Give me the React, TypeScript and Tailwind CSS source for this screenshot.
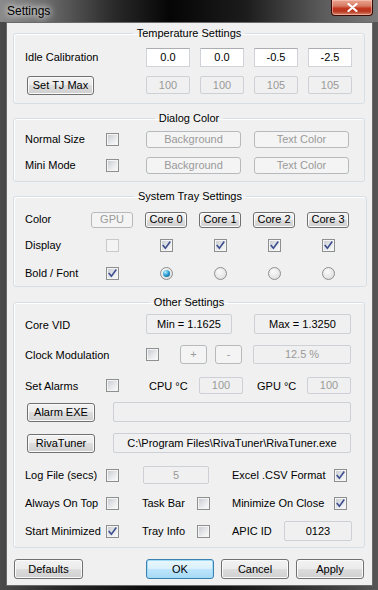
import React from "react";

function Check({ checked = false, disabled = false }: { checked?: boolean; disabled?: boolean }) {
  if (disabled) {
    return <div className="w-[13px] h-[13px] shrink-0 border border-[#c9c9c9] bg-[#f4f4f4]" />;
  }
  return (
    <div className="w-[13px] h-[13px] shrink-0 border border-[#8e8f8f] bg-[#f4f4f4] p-[1px]">
      <div className="w-full h-full bg-[linear-gradient(135deg,#c9cdd3_0%,#e9eaec_60%,#f9f9f9_100%)] flex items-center justify-center">
        {checked && (
          <svg width="9" height="9" viewBox="0 0 9 9">
            <path d="M1.2 4.6 L3.4 7.2 L7.8 1.2" fill="none" stroke="#3d4f8f" strokeWidth="1.6" strokeLinecap="square" />
          </svg>
        )}
      </div>
    </div>
  );
}

function Radio({ on = false }: { on?: boolean }) {
  return (
    <div className="w-[13px] h-[13px] shrink-0 rounded-full border border-[#8e8f8f] bg-[radial-gradient(circle_at_40%_35%,#fbfbfb_0%,#e2e2e2_70%,#cfcfcf_100%)] flex items-center justify-center">
      {on && (
        <div className="w-[7px] h-[7px] rounded-full bg-[radial-gradient(circle_at_35%_30%,#b4f0ff_0%,#2a9ad0_50%,#0a4a72_100%)]" />
      )}
    </div>
  );
}

function Btn({ children, className = "", disabled = false, def = false }: { children: React.ReactNode; className?: string; disabled?: boolean; def?: boolean }) {
  if (disabled) {
    return (
      <div className={"shrink-0 flex items-center justify-center border border-[#b6babd] rounded-[3px] bg-[#f4f4f4] text-[#9a9a9a] " + className}>
        {children}
      </div>
    );
  }
  if (def) {
    return (
      <div className={"shrink-0 flex items-center justify-center border border-[#3c7fb1] rounded-[3px] bg-[linear-gradient(#eaf6fd_0%,#d9f0fc_50%,#bee6fd_50%,#a7d9f5_100%)] shadow-[inset_0_0_0_1px_#9fdcf5] " + className}>
        {children}
      </div>
    );
  }
  return (
    <div className={"shrink-0 flex items-center justify-center border border-[#707070] rounded-[3px] bg-[linear-gradient(#f2f2f2_0%,#ebebeb_50%,#dddddd_50%,#cfcfcf_100%)] shadow-[inset_0_0_0_1px_#fbfbfb] " + className}>
      {children}
    </div>
  );
}

function Edit({ children, className = "" }: { children: React.ReactNode; className?: string }) {
  return (
    <div className={"shrink-0 flex items-center justify-center bg-white border border-[#d0d3d8] border-t-[#abadb3] " + className}>
      {children}
    </div>
  );
}

function Box({ children, className = "", dim = false }: { children?: React.ReactNode; className?: string; dim?: boolean }) {
  return (
    <div
      className={
        "shrink-0 flex items-center justify-center bg-[#f0f0f0] border border-[#cdd0d4] rounded-[2px] " +
        (dim ? "text-[#9a9a9a] " : "text-black ") +
        className
      }
    >
      {children}
    </div>
  );
}

function Group({ title, children, className = "" }: { title: string; children: React.ReactNode; className?: string }) {
  return (
    <fieldset className={"border border-[#d5dfe5] rounded-[3px] px-[11px] shadow-[inset_1px_1px_0_#ffffff] " + className}>
      {/* @ts-ignore */}
      <legend align="center" className="mx-auto px-[4px] leading-[16px]">
        {title}
      </legend>
      {children}
    </fieldset>
  );
}

export default function App() {
  return (
    <div className="w-[378px] h-[590px] overflow-hidden flex flex-col font-['Liberation_Sans',Arial,sans-serif] text-[11px] text-black bg-[linear-gradient(90deg,#4a4a4a_0%,#2a2a2a_15%,#0c0c0c_40%,#151515_60%,#3a3a3a_85%,#555555_100%)]">
      {/* Title bar */}
      <div className="h-[22px] shrink-0 flex items-start justify-between bg-[linear-gradient(90deg,#8a8a8a_0%,#6c6c6c_12%,#2a2a2a_30%,#050505_45%,#1c1c1c_65%,#5a5a5a_85%,#7a7a7a_100%)]">
        <div className="pl-[7px] pt-[3px] text-[12px] leading-[16px] text-black [text-shadow:0_0_6px_#ffffff,0_0_10px_#ffffff]">
          Settings
        </div>
        <div className="mr-[5px] w-[42px] h-[16px] rounded-b-[4px] border border-t-0 border-[#3b0a04] bg-[linear-gradient(#e9a591_0%,#d77a63_40%,#c4381f_55%,#b8361f_75%,#d88a6f_100%)] shadow-[inset_0_0_0_1px_rgba(255,210,200,0.5)] flex items-center justify-center">
          <svg width="11" height="9" viewBox="0 0 11 9">
            <path d="M1.5 1 L9.5 8 M9.5 1 L1.5 8" stroke="#ffffff" strokeWidth="2.2" strokeLinecap="round" />
          </svg>
        </div>
      </div>

      {/* Client area */}
      <div className="flex-1 ml-[6px] mr-[5px] mb-[4px] border border-[#6a6a6a] bg-[#f0f0f0] pl-[6px] pr-[7px] flex flex-col">
        {/* Temperature Settings */}
        <Group title="Temperature Settings" className="mt-[2px] pb-[9px]">
          <div className="flex items-center mt-[7px] h-[19px]">
            <div className="w-[121px] shrink-0">Idle Calibration</div>
            <div className="flex gap-[10px]">
              <Edit className="w-[44px] h-[19px]">0.0</Edit>
              <Edit className="w-[44px] h-[19px]">0.0</Edit>
              <Edit className="w-[44px] h-[19px]">-0.5</Edit>
              <Edit className="w-[44px] h-[19px]">-2.5</Edit>
            </div>
          </div>
          <div className="flex items-center mt-[9px] h-[18px]">
            <div className="w-[121px] shrink-0 flex">
              <Btn className="ml-[2px] w-[67px] h-[19px]">Set TJ Max</Btn>
            </div>
            <div className="flex gap-[10px]">
              <Box dim className="w-[44px] h-[18px]">100</Box>
              <Box dim className="w-[44px] h-[18px]">100</Box>
              <Box dim className="w-[44px] h-[18px]">105</Box>
              <Box dim className="w-[44px] h-[18px]">105</Box>
            </div>
          </div>
        </Group>

        {/* Dialog Color */}
        <Group title="Dialog Color" className="mt-[6px] pb-[7px]">
          <div className="flex items-center mt-[5px] h-[17px]">
            <div className="w-[81px] shrink-0">Normal Size</div>
            <Check />
            <Btn disabled className="ml-[27px] w-[95px] h-[17px]">Background</Btn>
            <Btn disabled className="ml-[13px] w-[95px] h-[17px]">Text Color</Btn>
          </div>
          <div className="flex items-center mt-[9px] h-[17px]">
            <div className="w-[81px] shrink-0">Mini Mode</div>
            <Check />
            <Btn disabled className="ml-[27px] w-[95px] h-[17px]">Background</Btn>
            <Btn disabled className="ml-[13px] w-[95px] h-[17px]">Text Color</Btn>
          </div>
        </Group>

        {/* System Tray Settings */}
        <Group title="System Tray Settings" className="mt-[6px] pb-[4px]">
          <div className="flex items-center mt-[7px] h-[17px]">
            <div className="w-[60px] shrink-0">Color</div>
            <div className="w-[54px] flex justify-center">
              <Btn disabled className="w-[42px] h-[16px]">GPU</Btn>
            </div>
            <div className="w-[54px] flex justify-center">
              <Btn className="w-[42px] h-[16px]">Core 0</Btn>
            </div>
            <div className="w-[54px] flex justify-center">
              <Btn className="w-[42px] h-[16px]">Core 1</Btn>
            </div>
            <div className="w-[54px] flex justify-center">
              <Btn className="w-[42px] h-[16px]">Core 2</Btn>
            </div>
            <div className="w-[54px] flex justify-center">
              <Btn className="w-[42px] h-[16px]">Core 3</Btn>
            </div>
          </div>
          <div className="flex items-center mt-[9px] h-[17px]">
            <div className="w-[60px] shrink-0">Display</div>
            <div className="w-[54px] flex justify-center"><Check disabled /></div>
            <div className="w-[54px] flex justify-center"><Check checked /></div>
            <div className="w-[54px] flex justify-center"><Check checked /></div>
            <div className="w-[54px] flex justify-center"><Check checked /></div>
            <div className="w-[54px] flex justify-center"><Check checked /></div>
          </div>
          <div className="flex items-center mt-[11px] h-[17px]">
            <div className="w-[60px] shrink-0">Bold / Font</div>
            <div className="w-[54px] flex justify-center"><Check checked /></div>
            <div className="w-[54px] flex justify-center"><Radio on /></div>
            <div className="w-[54px] flex justify-center"><Radio /></div>
            <div className="w-[54px] flex justify-center"><Radio /></div>
            <div className="w-[54px] flex justify-center"><Radio /></div>
          </div>
        </Group>

        {/* Other Settings */}
        <Group title="Other Settings" className="mt-[7px] pb-[6px]">
          <div className="flex items-center mt-[4px] h-[20px]">
            <div className="w-[121px] shrink-0 pt-[3px]">Core VID</div>
            <Box className="w-[86px] h-[20px]">Min = 1.1625</Box>
            <Box className="ml-[22px] w-[97px] h-[20px]">Max = 1.3250</Box>
          </div>
          <div className="flex items-center mt-[11px] h-[19px]">
            <div className="w-[121px] shrink-0 pt-[2px]">Clock Modulation</div>
            <Check />
            <Btn disabled className="ml-[21px] w-[27px] h-[19px]">+</Btn>
            <Btn disabled className="ml-[8px] w-[27px] h-[19px]">-</Btn>
            <Box dim className="ml-[11px] w-[98px] h-[19px]">12.5 %</Box>
          </div>
          <div className="flex items-center mt-[13px] h-[17px]">
            <div className="w-[81px] shrink-0 pt-[2px]">Set Alarms</div>
            <Check />
            <div className="ml-[30px] w-[50px] shrink-0 pt-[1px]">CPU °C</div>
            <Box dim className="w-[44px] h-[17px]">100</Box>
            <div className="ml-[14px] w-[50px] shrink-0 pt-[1px]">GPU °C</div>
            <Box dim className="w-[44px] h-[17px]">100</Box>
          </div>
          <div className="flex items-center mt-[8px] h-[20px]">
            <Btn className="ml-[2px] w-[68px] h-[19px]">Alarm EXE</Btn>
            <Box className="ml-[18px] w-[238px] h-[20px]" />
          </div>
          <div className="flex items-center mt-[11px] h-[20px]">
            <Btn className="ml-[2px] w-[68px] h-[19px]">RivaTuner</Btn>
            <Box className="ml-[18px] w-[238px] h-[20px]">{"C:\\Program Files\\RivaTuner\\RivaTuner.exe"}</Box>
          </div>
          <div className="flex items-center mt-[13px] h-[18px]">
            <div className="w-[81px] shrink-0">Log File (secs)</div>
            <Check />
            <Box dim className="ml-[24px] w-[66px] h-[18px]">5</Box>
            <div className="ml-[23px] w-[102px] shrink-0">Excel .CSV Format</div>
            <Check checked />
          </div>
          <div className="flex items-center mt-[10px] h-[18px]">
            <div className="w-[81px] shrink-0">Always On Top</div>
            <Check />
            <div className="ml-[23px] w-[55px] shrink-0">Task Bar</div>
            <Check />
            <div className="ml-[22px] w-[102px] shrink-0">Minimize On Close</div>
            <Check checked />
          </div>
          <div className="flex items-center mt-[9px] h-[20px]">
            <div className="w-[81px] shrink-0 whitespace-nowrap">Start Minimized</div>
            <Check checked />
            <div className="ml-[23px] w-[55px] shrink-0">Tray Info</div>
            <Check />
            <div className="ml-[22px] w-[52px] shrink-0">APIC ID</div>
            <Box className="w-[68px] h-[20px]">0123</Box>
          </div>
        </Group>

        {/* Bottom buttons */}
        <div className="flex items-center mt-[11px] h-[20px]">
          <Btn className="ml-[1px] w-[69px] h-[20px]">Defaults</Btn>
          <Btn def className="ml-[63px] w-[68px] h-[20px]">OK</Btn>
          <Btn className="ml-[7px] w-[68px] h-[20px]">Cancel</Btn>
          <Btn className="ml-[7px] w-[68px] h-[20px]">Apply</Btn>
        </div>
      </div>
    </div>
  );
}
